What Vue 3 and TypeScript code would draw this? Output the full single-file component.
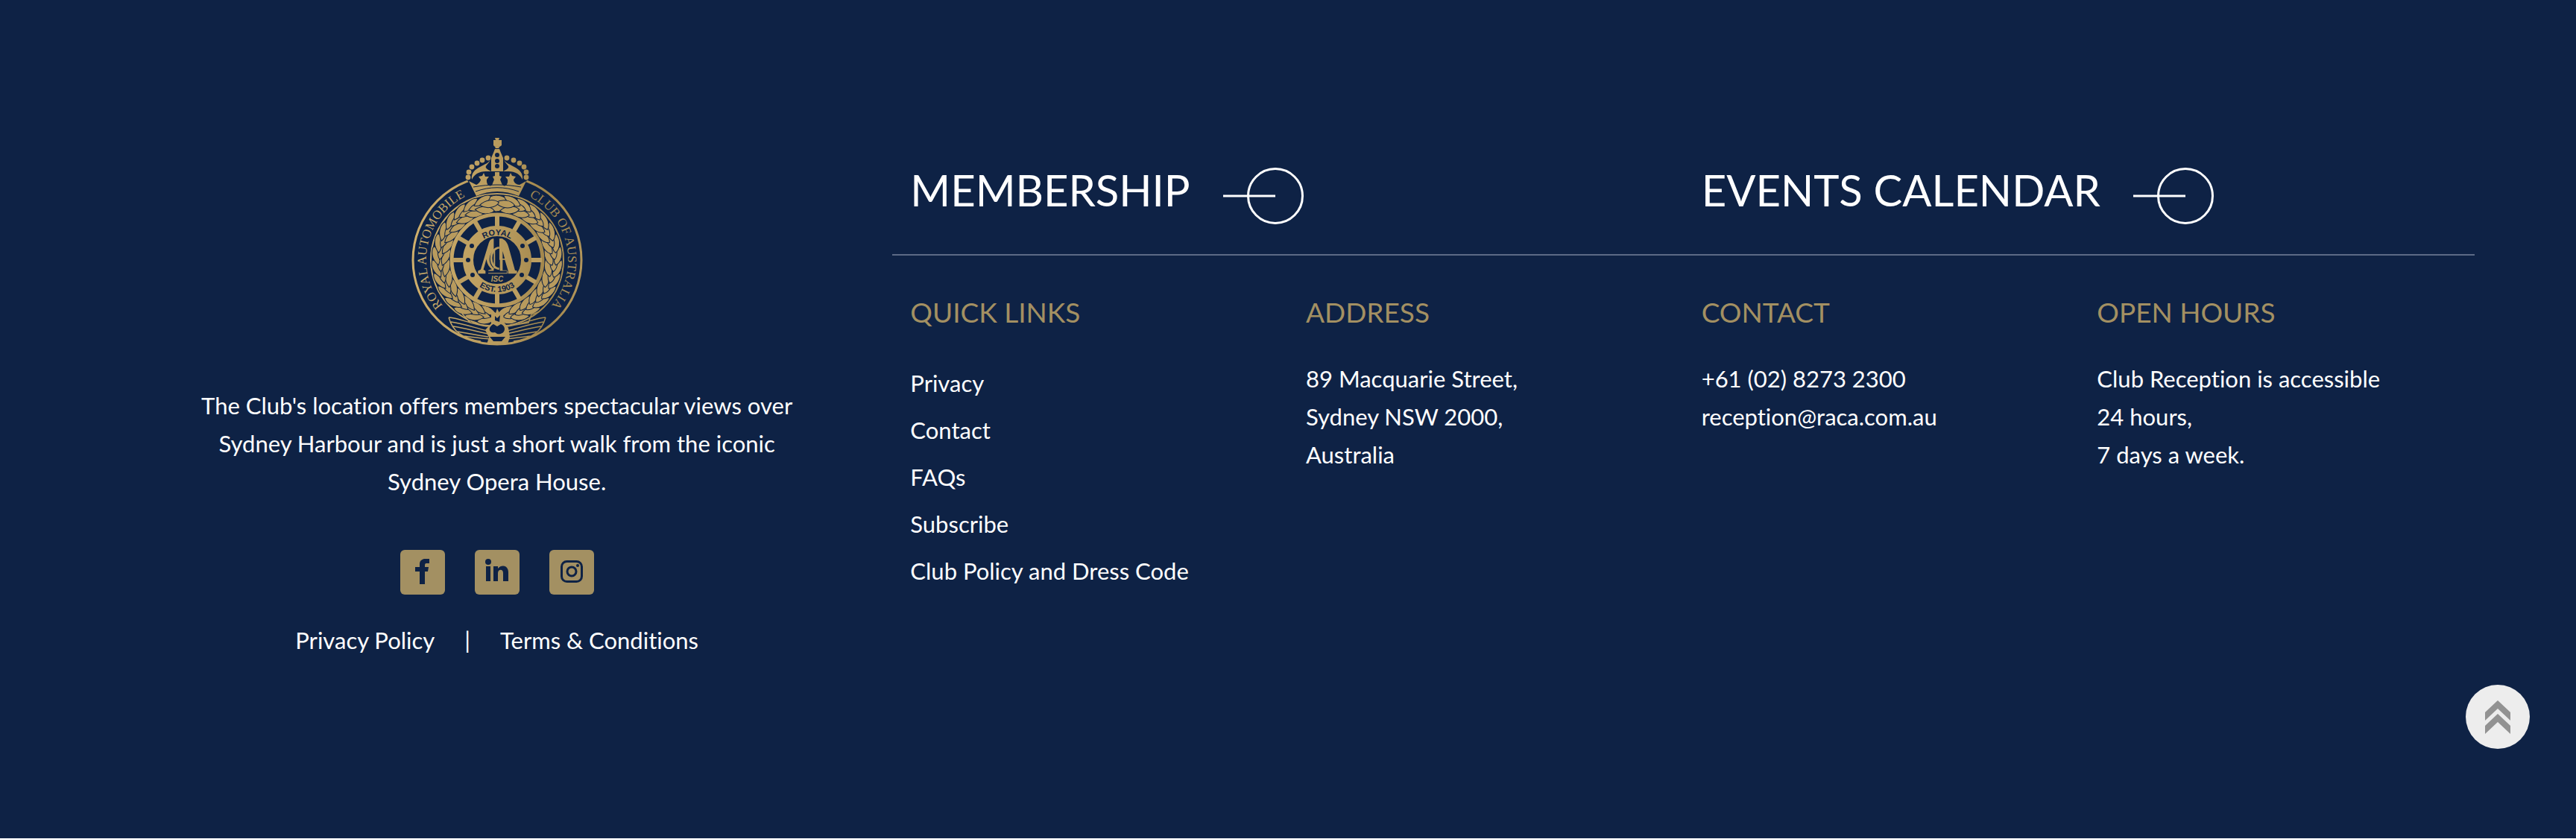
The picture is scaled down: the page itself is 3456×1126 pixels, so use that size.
<script setup lang="ts">
interface Leaf { x: number; y: number; a: number }
interface Column { title: string; lines: string[] }

const quickLinks: string[] = ['Privacy', 'Contact', 'FAQs', 'Subscribe', 'Club Policy and Dress Code']
const columns: Column[] = [
  { title: 'ADDRESS', lines: ['89 Macquarie Street,', 'Sydney NSW 2000,', 'Australia'] },
  { title: 'CONTACT', lines: ['+61 (02) 8273 2300', 'reception@raca.com.au'] },
  { title: 'OPEN HOURS', lines: ['Club Reception is accessible', '24 hours,', '7 days a week.'] },
]
const features: string[] = ['MEMBERSHIP', 'EVENTS CALENDAR']

// Laurel wreath: three rings of leaves rising from the base on both sides
const leaves: Leaf[] = [{ x: 0, y: -70, a: 0 }, { x: 0, y: -82, a: 0 }]
for (let i = 0; i < 14; i++) {
  for (const [ring, radius] of [69, 82, 76].entries()) {
    const deg = 10 + i * 12 + (ring === 2 ? 6 : 0)
    const t = (deg * Math.PI) / 180
    const lean = [18, -18, 0][ring]
    leaves.push({ x: radius * Math.sin(t), y: radius * Math.cos(t), a: -deg - lean })
    leaves.push({ x: -radius * Math.sin(t), y: radius * Math.cos(t), a: deg + lean })
  }
}
const spokes: number[] = Array.from({ length: 12 }, (_, i) => i * 30)
const rivets: number[][] = [[-34, -19], [-39, 0], [-33, 20], [34, -19], [39, 0], [33, 20]]
const pearls: number[][] = [
  [-12, -137], [-20, -134], [-27, -130], [-34, -125], [-38, -118], [-39, -111],
  [13, -137], [22, -134], [30, -130], [36, -125], [39, -118], [39, -111],
]
</script>

<template>
  <footer class="footer">
    <section class="brand">
      <svg class="crest" viewBox="-115 -165 230 283" role="img" aria-label="Royal Automobile Club of Australia">
        <defs>
          <linearGradient id="gold" gradientUnits="userSpaceOnUse" x1="-115" y1="0" x2="115" y2="0">
            <stop offset="0" stop-color="#d0b06c" />
            <stop offset="0.6" stop-color="#b3965a" />
            <stop offset="0.78" stop-color="#a1864b" />
            <stop offset="1" stop-color="#b3965a" />
          </linearGradient>
          <path id="arc-left" d="M-73 61A95 95 0 0 1 -41 -86" />
          <path id="arc-right" d="M43 -85A95 95 0 0 1 71 63" />
          <path id="arc-royal" d="M-28 -18A33 33 0 0 1 28 -18" />
          <path id="arc-est" d="M-38 20A43 43 0 0 0 38 20" />
        </defs>
        <circle r="113" fill="none" stroke="url(#gold)" stroke-width="3" />
        <path d="M-40 -107L-26 -84H26L40 -107L36 -117H-36Z" fill="#0e2245" />
        <circle r="89" fill="none" stroke="url(#gold)" stroke-width="2" />

        <g fill="url(#gold)">
          <path
            v-for="(leaf, i) in leaves"
            :key="i"
            d="M-13 0C-8-6 4-7 13 0C4 7-8 6-13 0Z"
            :transform="`translate(${leaf.x} ${leaf.y}) rotate(${leaf.a})`"
            stroke="#0e2245"
            stroke-width="1"
          />
        </g>

        <circle r="64" fill="#0e2245" />
        <circle r="61" fill="none" stroke="url(#gold)" stroke-width="5" />
        <rect v-for="s in spokes" :key="s" x="-3" y="-60" width="6" height="20" fill="#bb9e61" :transform="`rotate(${s})`" />
        <circle r="39" fill="none" stroke="url(#gold)" stroke-width="14" />
        <circle v-for="(r, i) in rivets" :key="i" :cx="r[0]" :cy="r[1]" r="3" fill="#0e2245" />

        <g transform="translate(0 -2) scale(0.92)">
          <g fill="url(#gold)">
            <path d="M-5 -29V18H-13V22H15V18H4V-29C14-29 16-19 18-12L26 17L29 18V22H16V18L10-2H8V17H14V21H-13V17L-3 14V-14C-14-6-13 8-5 14L-6 17C-17 9-18-4-12-12L-20 16L-17 18V22H-28V18L-24 16L-13-20C-11-27-9-29-5-29Z" />
            <path d="M3 -29H8L13 -12H8V-5H12V2H3Z" />
          </g>
          <path d="M-1 -28H3V18H-1ZM8 -11L11 0H8Z" fill="#0e2245" />
          <path d="M3 -16C-12 -15 -13 13 3 15" fill="none" stroke="url(#gold)" stroke-width="3" />
        </g>
        <text y="29" class="initials">ISC</text>

        <g class="motto">
          <text><textPath href="#arc-left">ROYAL AUTOMOBILE</textPath></text>
          <text><textPath href="#arc-right">CLUB OF AUSTRALIA</textPath></text>
        </g>
        <g class="hub">
          <text><textPath href="#arc-royal" startOffset="50%">ROYAL</textPath></text>
          <text><textPath href="#arc-est" startOffset="50%">EST. 1903</textPath></text>
        </g>

        <g fill="url(#gold)">
          <path d="M-2-151L-5-154V-161H-2L-3-164H3L2-161H6V-154L2-151L3-150H-3Z" />
          <path d="M-3-149H3L5-144L8-137V-119H-8V-137L-5-144Z" />
          <circle v-for="(p, i) in pearls" :key="i" :cx="p[0]" :cy="p[1]" r="3.4" />
          <path d="M-9-135C-12-126-36-126-34-108C-28-120-18-119-8-119C-22-126-12-126-9-135ZM9-135C12-126 36-126 34-108C28-120 18-119 8-119C22-126 12-126 9-135Z" />
          <path d="M-38-106L-28-101C-25-102-22-106-22-108L-25-112L-20-113L-18-117L-16-112L-11-112L-14-108C-15-99-7-97-6-103L-4-108L-6-112L-3-113V-118H3V-113L6-112L4-108L6-103C8-97 15-99 14-108L11-112L16-112L18-117L20-113L25-112L22-108C22-104 26-101 30-101L39-106L29-86C10-94-10-94-28-86Z" />
        </g>
        <path d="M-29-92C-10-99 10-99 29-92M-32-98C-10-102 10-102 32-98" fill="none" stroke="#0e2245" stroke-width="1" />
        <g fill="#0e2245"><circle cy="-141" r="3" /><circle cy="-133" r="3" /><circle cy="-126" r="3" /></g>

        <g fill="none" stroke="url(#gold)" stroke-width="1.5">
          <path d="M-65 77C-50 78-35 86-14 89M-65 77C-60 95-48 105-22 109M-62 83C-46 85-30 91-13 95M-59 89C-44 91-28 96-12 99M-54 96C-40 98-28 101-12 103M-46 102C-34 103-24 105-10 106M-47 72L-36 84L-12 89" />
          <path d="M65 77C50 78 35 86 14 89M65 77C60 95 48 105 22 109M62 83C46 85 30 91 13 95M59 89C44 91 28 96 12 99M54 96C40 98 28 101 12 103M46 102C34 103 24 105 10 106M55 70L46 73L42 84L12 89" />
        </g>
        <path d="M-8 67L-2 71L0 65L3 71L9 68L8 82L15 91L17 103L14 113H-14L-11 104L-16 94L-8 85Z" fill="url(#gold)" />
        <path d="M-3 75L0 78L4 74L3 83L-3 81ZM-5 86C-14 91-10 99-3 97L0 99C10 101 14 90 5 86L0 89ZM-10 103L-5 109H6L11 103M-2 109V114" fill="#0e2245" />
      </svg>

      <p class="about">The Club's location offers members spectacular views over Sydney Harbour and is just a short walk from the iconic Sydney Opera House.</p>

      <div class="social">
        <a href="#" aria-label="Facebook">
          <svg viewBox="0 0 60 60"><path d="M26 46V29H20V23H26V19C26 14 30 12 33 12H39V18H35C33 18 33 20 33 21V23H38L37 29H33V46Z" /></svg>
        </a>
        <a href="#" aria-label="LinkedIn">
          <svg viewBox="0 0 60 60"><circle cx="18" cy="16" r="4" /><path d="M15 22H21V42H15ZM25 22H31V25C36 19 45 21 45 30V42H38V31C38 25 31 26 31 31V42H25Z" /></svg>
        </a>
        <a href="#" aria-label="Instagram">
          <svg viewBox="0 0 60 60">
            <rect x="16.5" y="15.5" width="27" height="27" rx="7" fill="none" stroke="#0e2245" stroke-width="3" />
            <circle cx="30" cy="29" r="6" fill="none" stroke="#0e2245" stroke-width="3" /><circle cx="38" cy="21" r="2" />
          </svg>
        </a>
      </div>

      <nav class="legal">
        <a href="#">Privacy Policy</a><span>|</span><a href="#">Terms &amp; Conditions</a>
      </nav>
    </section>

    <section class="info">
      <div class="features">
        <a v-for="feature in features" :key="feature" href="#">
          <span>{{ feature }}</span>
          <svg viewBox="0 0 108 76" aria-hidden="true"><circle cx="70" cy="38" r="36.5" /><path d="M0 38H70" /></svg>
        </a>
      </div>
      <div class="columns">
        <nav>
          <h2>QUICK LINKS</h2>
          <ul><li v-for="link in quickLinks" :key="link"><a href="#">{{ link }}</a></li></ul>
        </nav>
        <div v-for="column in columns" :key="column.title">
          <h2>{{ column.title }}</h2>
          <p><template v-for="line in column.lines" :key="line">{{ line }}<br></template></p>
        </div>
      </div>
    </section>

    <button class="to-top" type="button" aria-label="Back to top">
      <svg viewBox="0 0 86 86"><path d="M26 37L43 21L60 37V48L43 32L26 48ZM26 55L43 39L60 55V66L43 50L26 66Z" /></svg>
    </button>
  </footer>
</template>

<style>
body { background: #fff; }
</style>

<style scoped>
.footer {
  position: relative;
  display: grid;
  grid-template-columns: minmax(0, 1fr) minmax(0, 2fr);
  padding: 184px 136px 240px;
  background: #0e2245;
  color: #fff;
  font: 400 31px/51px "Gill Sans", Lato, sans-serif;
  font-variant-ligatures: none;
}
a { color: inherit; text-decoration: none; }
.brand { display: flex; flex-direction: column; align-items: center; }
.crest { width: 230px; height: 283px; }
.motto { fill: url(#gold); font: 400 17px "Liberation Serif", serif; }
.hub { fill: #0e2245; font: 700 11px "Liberation Sans", sans-serif; text-anchor: middle; }
.initials { fill: url(#gold); font: italic 700 10px "Liberation Sans", sans-serif; text-anchor: middle; }
.about { max-width: 820px; margin: 52px 0 66px; text-align: center; }
.social { display: flex; gap: 40px; }
.social a { width: 60px; height: 60px; border-radius: 6px; background: #a39062; }
.social svg { display: block; fill: #0e2245; }
.legal { display: flex; gap: 40px; margin-top: 36px; }
.features { display: grid; grid-template-columns: repeat(2, 1fr); padding: 41px 0 40px; border-bottom: 2px solid #5c6a86; }
.features a { display: flex; align-items: center; gap: 44px; padding-left: 24px; font-size: 58px; line-height: 60px; }
.features span { padding-bottom: 16px; }
.features svg { width: 108px; height: 76px; fill: none; stroke: #fff; stroke-width: 3; }
.columns { display: grid; grid-template-columns: repeat(4, 1fr); padding-top: 52px; }
.columns > * { padding-left: 24px; }
h2 { margin: 0 0 40px; color: #a39062; font-size: 37px; line-height: 48px; font-weight: 400; }
p { margin: 0; }
ul { margin: 0; padding: 0; list-style: none; }
li { line-height: 63px; }
.to-top { position: absolute; right: 62px; bottom: 120px; width: 86px; height: 86px; padding: 0; border: 0; border-radius: 50%; background: #ededed; }
.to-top svg { display: block; fill: #929292; }
</style>
